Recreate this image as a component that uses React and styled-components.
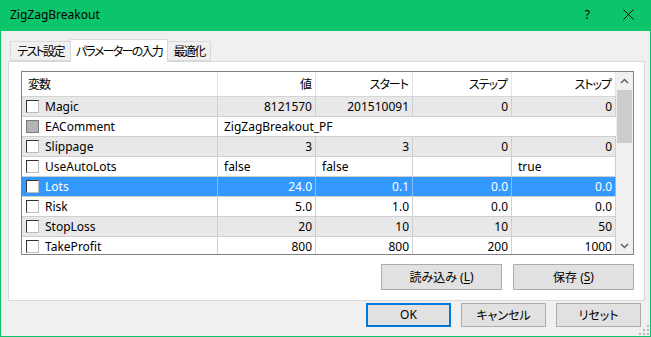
import styled, { createGlobalStyle } from 'styled-components';

const GlobalStyle = createGlobalStyle`
  * { box-sizing: border-box; }
  body {
    margin: 0;
    font-family: "Noto Sans", "Noto Sans CJK JP", sans-serif;
    font-size: 12px;
    color: #000;
    font-feature-settings: "palt";
  }
`;

const COLS = '196px 98px 97px 99px 104px';

const rows = [
  { name: 'Magic', v: '8121570', start: '201510091', step: '0', stop: '0', shade: true },
  { name: 'EAComment', text: 'ZigZagBreakout_PF', locked: true },
  { name: 'Slippage', v: '3', start: '3', step: '0', stop: '0', shade: true },
  { name: 'UseAutoLots', v: 'false', start: 'false', step: '', stop: 'true', left: true },
  { name: 'Lots', v: '24.0', start: '0.1', step: '0.0', stop: '0.0', selected: true },
  { name: 'Risk', v: '5.0', start: '1.0', step: '0.0', stop: '0.0' },
  { name: 'StopLoss', v: '20', start: '10', step: '10', stop: '50', shade: true },
  { name: 'TakeProfit', v: '800', start: '800', step: '200', stop: '1000' },
];

const App = () => {
  return (
    <>
      <GlobalStyle />
      <Window>
        <TitleBar>
          <Title>ZigZagBreakout</Title>
          <TitleButtons>
            <Help>?</Help>
            <svg width="11" height="11" viewBox="0 0 11 11">
              <path d="M0.5 0.5 L10.5 10.5 M10.5 0.5 L0.5 10.5" stroke="#000" strokeWidth="1" />
            </svg>
          </TitleButtons>
        </TitleBar>
        <Body>
          <Tabs>
            <Tab $w={61}>テスト設定</Tab>
            <Tab $w={98} $active>パラメーターの入力</Tab>
            <Tab $w={44}>最適化</Tab>
          </Tabs>
          <Panel>
            <List>
              <Grid>
                <HeaderRow>
                  <HeadCell>変数</HeadCell>
                  <HeadCell $right>値</HeadCell>
                  <HeadCell $right>スタート</HeadCell>
                  <HeadCell $right>ステップ</HeadCell>
                  <HeadCell $right>ストップ</HeadCell>
                </HeaderRow>
                {rows.map((r) => (
                  <Row key={r.name} $shade={r.shade} $selected={r.selected}>
                    <NameCell $selected={r.selected}>
                      <Check $locked={r.locked} />
                      {r.name}
                    </NameCell>
                    {r.text ? (
                      <WideCell>{r.text}</WideCell>
                    ) : (
                      <>
                        <Cell $left={r.left} $selected={r.selected}>{r.v}</Cell>
                        <Cell $left={r.left} $selected={r.selected}>{r.start}</Cell>
                        <Cell $left={r.left} $selected={r.selected}>{r.step}</Cell>
                        <Cell $left={r.left} $selected={r.selected}>{r.stop}</Cell>
                      </>
                    )}
                  </Row>
                ))}
              </Grid>
              <ScrollBar>
                <Arrow>
                  <svg width="9" height="6" viewBox="0 0 9 6">
                    <path d="M1 5 L4.5 1.5 L8 5" stroke="#606060" strokeWidth="1.5" fill="none" />
                  </svg>
                </Arrow>
                <Track>
                  <Thumb />
                </Track>
                <Arrow>
                  <svg width="9" height="6" viewBox="0 0 9 6">
                    <path d="M1 1 L4.5 4.5 L8 1" stroke="#606060" strokeWidth="1.5" fill="none" />
                  </svg>
                </Arrow>
              </ScrollBar>
            </List>
            <PanelButtons>
              <Button $w={121} $h={26}>読み込み (<u>L</u>)</Button>
              <Button $w={121} $h={26}>保存 (<u>S</u>)</Button>
            </PanelButtons>
          </Panel>
          <Footer>
            <Button $w={85} $h={24} $primary>OK</Button>
            <Button $w={85} $h={24}>キャンセル</Button>
            <Button $w={85} $h={24}>リセット</Button>
          </Footer>
          <Grip>
            <svg width="10" height="10" viewBox="0 0 10 10" fill="#b8b8b8">
              <rect x="8" y="0" width="2" height="2" />
              <rect x="4" y="4" width="2" height="2" />
              <rect x="8" y="4" width="2" height="2" />
              <rect x="0" y="8" width="2" height="2" />
              <rect x="4" y="8" width="2" height="2" />
              <rect x="8" y="8" width="2" height="2" />
            </svg>
          </Grip>
        </Body>
      </Window>
    </>
  );
};

const Window = styled.div`
  width: 651px;
  height: 337px;
  display: flex;
  flex-direction: column;
  background-color: #f0f0f0;
  border: 1px solid #0cc56b;
  border-top: none;
`;

const TitleBar = styled.div`
  height: 31px;
  margin: 0 -1px;
  background-color: #0cc56b;
  display: flex;
  align-items: center;
  justify-content: space-between;
  padding: 0 17px 2px 10px;
`;

const Title = styled.div`
  font-size: 12px;
  color: #000;
`;

const TitleButtons = styled.div`
  display: flex;
  align-items: center;
  gap: 33px;
`;

const Help = styled.span`
  font-size: 12px;
`;

const Body = styled.div`
  flex: 1;
  position: relative;
  padding: 8px 5px 0 7px;
  display: flex;
  flex-direction: column;
`;

const Tabs = styled.div`
  display: flex;
  align-items: flex-end;
  height: 23px;
  padding-left: 2px;
  margin-bottom: -1px;
  position: relative;
  z-index: 1;
`;

const Tab = styled.div`
  width: ${(p) => p.$w}px;
  height: ${(p) => (p.$active ? 23 : 20)}px;
  margin-bottom: ${(p) => (p.$active ? 0 : 1)}px;
  display: flex;
  align-items: center;
  justify-content: center;
  background-color: ${(p) => (p.$active ? '#fff' : '#f0f0f0')};
  border: 1px solid #d9d9d9;
  border-bottom: ${(p) => (p.$active ? 'none' : '1px solid #d9d9d9')};
  margin-right: ${(p) => (p.$active ? '-1px' : '0')};
  margin-left: ${(p) => (p.$active ? '-1px' : '0')};
  white-space: nowrap;
  letter-spacing: -1.7px;
  padding-bottom: 1px;
`;

const Panel = styled.div`
  background-color: #fff;
  border: 1px solid #d9d9d9;
  padding: 9px 10px 10px 12px;
  display: flex;
  flex-direction: column;
`;

const List = styled.div`
  height: 184px;
  border: 1px solid #828282;
  display: flex;
  overflow: hidden;
`;

const Grid = styled.div`
  flex: 1;
  display: flex;
  flex-direction: column;
`;

const HeaderRow = styled.div`
  display: grid;
  grid-template-columns: ${COLS};
  height: 25px;
  flex-shrink: 0;
  border-bottom: 1px solid #d5d5d5;
`;

const HeadCell = styled.div`
  display: flex;
  align-items: center;
  justify-content: ${(p) => (p.$right ? 'flex-end' : 'flex-start')};
  padding: 0 4px 1px 6px;
  border-right: 1px solid #e5e5e5;
  letter-spacing: -1px;
`;

const Row = styled.div`
  display: grid;
  grid-template-columns: ${COLS};
  height: 20px;
  flex-shrink: 0;
  border-bottom: 1px solid #cfcfcf;
  background-color: ${(p) => (p.$selected ? '#3399ff' : p.$shade ? '#e8e8e8' : '#fff')};
  color: ${(p) => (p.$selected ? '#fff' : '#000')};
`;

const Cell = styled.div`
  display: flex;
  align-items: center;
  justify-content: ${(p) => (p.$left ? 'flex-start' : 'flex-end')};
  padding: 0 3px 1px 6px;
  border-right: 1px solid ${(p) => (p.$selected ? '#80bfff' : '#cfcfcf')};
  white-space: nowrap;
`;

const NameCell = styled(Cell)`
  justify-content: flex-start;
  padding-left: 4px;
  gap: 6px;
`;

const WideCell = styled.div`
  grid-column: 2 / 6;
  display: flex;
  align-items: center;
  padding: 0 6px 1px;
`;

const Check = styled.span`
  width: 13px;
  height: 13px;
  flex-shrink: 0;
  background-color: ${(p) => (p.$locked ? '#b4b4b4' : '#fff')};
  border: 1px solid ${(p) => (p.$locked ? '#7a7a7a' : '#333')};
  border-right-color: ${(p) => (p.$locked ? '#7a7a7a' : '#bdbdbd')};
  border-bottom-color: ${(p) => (p.$locked ? '#7a7a7a' : '#bdbdbd')};
`;

const ScrollBar = styled.div`
  width: 17px;
  flex-shrink: 0;
  background-color: #f0f0f0;
  display: flex;
  flex-direction: column;
`;

const Arrow = styled.div`
  height: 17px;
  display: flex;
  align-items: center;
  justify-content: center;
`;

const Track = styled.div`
  flex: 1;
  padding: 1px 1px 0;
`;

const Thumb = styled.div`
  height: 53px;
  background-color: #cdcdcd;
`;

const PanelButtons = styled.div`
  display: flex;
  justify-content: flex-end;
  gap: 11px;
  margin-top: 9px;
`;

const Button = styled.div`
  width: ${(p) => p.$w}px;
  height: ${(p) => p.$h}px;
  display: flex;
  align-items: center;
  justify-content: center;
  background-color: #e1e1e1;
  border: ${(p) => (p.$primary ? '2px solid #0078d7' : '1px solid #adadad')};
  white-space: nowrap;
  padding-bottom: 1px;
  u { text-underline-offset: 2px; }
`;

const Footer = styled.div`
  display: flex;
  justify-content: flex-end;
  gap: 10px;
  margin-top: 2px;
  padding-right: 4px;
`;

const Grip = styled.div`
  position: absolute;
  right: 1px;
  bottom: 1px;
  display: flex;
`;

export default App;
